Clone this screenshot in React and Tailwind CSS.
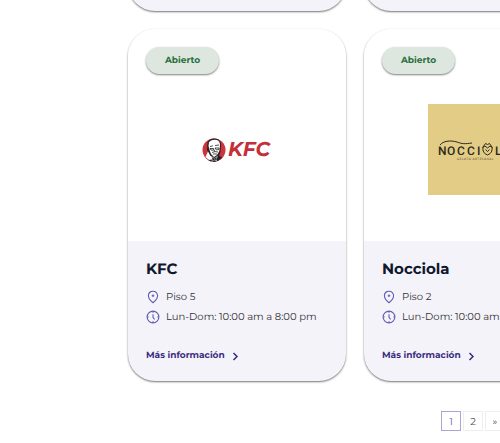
function PinIcon() {
  return (
    <svg className="size-3.5 shrink-0" viewBox="0 0 14 14" fill="none" stroke="#625bb5" strokeWidth="1.1" aria-hidden="true">
      <path d="M7 1.2C4.2 1.2 2.4 3.2 2.4 5.8c0 2.8 2.6 5.4 4.6 7 2-1.600 4.600-4.200 4.600-7C11.600 3.200 9.800 1.200 7 1.200Z" strokeLinejoin="round" />
      <path d="M7 4.500v2.600M5.700 5.800h2.600" />
    </svg>
  );
}

function ClockIcon() {
  return (
    <svg className="size-3.5 shrink-0" viewBox="0 0 14 14" fill="none" stroke="#625bb5" strokeWidth="1.1" aria-hidden="true">
      <circle cx="7" cy="7" r="5.9" />
      <path d="M7 1v1.700M7 11.300V13M1 7h1.700M11.300 7H13M7 4.200V7.400l1.600 1.900" />
    </svg>
  );
}

function Chevron() {
  return (
    <svg className="size-2.5" viewBox="0 0 10 10" fill="none" stroke="currentColor" strokeWidth="1.5" aria-hidden="true">
      <path d="m2.500 2 3.500 3.500L2.500 9" />
    </svg>
  );
}

function KfcLogo() {
  return (
    <svg className="h-[26px] w-[70px]" viewBox="0 0 70 26" role="img" aria-label="KFC">
      <circle cx="12" cy="13" r="11.500" fill="#c9343d" />
      <path d="M6 23 7.500 17.500 5 13 5.500 5Q8 1 13 1.500Q19 2 19 8L18.500 15 17 18.500 20 20.500Q16 25 11 25Q8 24.600 6 23Z" fill="#252122" />
      <path d="M7 5Q10 2 15 3Q18 4 18 8L17.400 14 15 18 12 20 9 17 7.500 13 6.500 9Z" fill="#fff" />
      <path d="M8 9.500 11 8.800M13 8.500 17 8M8 11.500h3.600v1.600H9ZM13 11h4v1.500l-2.500.500ZM12 12.500l.6 2M10 15.500q3-1.600 6-.500M11 17h4" fill="none" stroke="#252122" strokeWidth=".8" />
      <path d="M6 14.500 8.200 18.500 12 22 7 23 3.500 20Z" fill="#fff" />
      <path d="m9.500 19.500 3 1.800 3-2-1.500 3 1 2-3-1.500-2 2 .2-2.800Z" fill="#252122" stroke="#fff" strokeWidth=".5" />
      <text x="26" y="19" fill="#c52f39" className="font-[Montserrat,Inter,sans-serif] text-[20px] font-bold italic">KFC</text>
    </svg>
  );
}

function NocciolaLogo() {
  return (
    <svg className="size-[91px]" viewBox="0 0 91 91" role="img" aria-label="Nocciola gelato artesanal">
      <rect width="91" height="91" fill="#e3cc85" />
      <g fill="#2b2820" className="font-[Roboto,sans-serif] text-[12px] font-medium">
        <text x="10" y="51">N</text>
        <text x="19" y="51">O</text>
        <text x="29" y="51">C</text>
        <text x="39" y="51">C</text>
        <text x="49" y="51">I</text>
        <text x="67" y="51">L</text>
        <text x="75" y="51">A</text>
      </g>
      <g fill="none" stroke="#2b2820" strokeWidth="1">
        <path d="M12 41C15 37 22 36 29 38C34 40 37 40 44 39" />
        <path d="M55 43Q54 49 59.500 51Q65 49 64 43L61.500 39.500 59.500 40.500 57.500 39.500Z" />
        <path d="M54.500 43.500 57 42 59.500 44 62 42 64.500 43.500M57.500 45.500 59.500 47.500 61.500 45.500" />
      </g>
      <text x="29" y="56" fill="#4c4531" className="font-[Lato,sans-serif] text-[3px] tracking-[0.5px]">GELATO ARTESANAL</text>
    </svg>
  );
}

const cardFrame = "overflow-hidden rounded-[27px] shadow-[0_1px_2px_rgba(0,0,0,0.55)]";

function StoreCard({ name, floor, hours, logo }) {
  return (
    <article className={`${cardFrame} bg-[#f4f3f9]`}>
      <div className="flex h-[212px] flex-col bg-white px-[18px] pt-[18px]">
        <span className="flex h-[27px] w-[73px] items-center justify-center rounded-full bg-[#dde7df] text-[9px] font-bold text-[#28703e] shadow-[0_1px_2px_rgba(0,0,0,0.5)]">
          Abierto
        </span>
        <div className="flex h-[151px] items-center justify-center">{logo}</div>
      </div>
      <div className="flex h-[140px] flex-col px-[18px] pt-[18px]">
        <h2 className="text-[15px] leading-5 font-bold text-[#10182d]">{name}</h2>
        <ul className="mt-2 text-[10px] leading-5 text-[#323137]">
          <li className="flex items-center gap-1.5 whitespace-nowrap"><PinIcon />{floor}</li>
          <li className="flex items-center gap-1.5 whitespace-nowrap"><ClockIcon />{hours}</li>
        </ul>
        <a href="#info" className="mt-[21px] flex items-center gap-1.5 text-[9px] leading-4 font-bold text-[#3b2c80]">
          Más información<Chevron />
        </a>
      </div>
    </article>
  );
}

export default function App() {
  const hours = "Lun-Dom: 10:00 am a 8:00 pm";
  return (
    <div className="overflow-hidden bg-white font-[Montserrat,Inter,sans-serif] [text-rendering:geometricPrecision]">
      <main className="ml-32 w-[690px] pb-3">
        <div className="-mx-1 grid h-[15px] grid-cols-3 content-end gap-[18px] overflow-hidden px-1 pb-1">
          <div className={`${cardFrame} h-16 bg-[#f4f3f9]`} />
          <div className={`${cardFrame} h-16 bg-[#f4f3f9]`} />
          <div className={`${cardFrame} h-16 bg-[#f4f3f9]`} />
        </div>
        <section className="mt-3.5 grid grid-cols-3 gap-[18px]">
          <StoreCard name="KFC" floor="Piso 5" hours={hours} logo={<KfcLogo />} />
          <StoreCard name="Nocciola" floor="Piso 2" hours={hours} logo={<NocciolaLogo />} />
        </section>
        <nav aria-label="Paginación" className="mt-[30px] flex justify-center gap-0.5 text-[10px] text-[#4a4a4a]">
          <button className="size-5 border border-[#aaa5d2] text-[#625bb5]">1</button>
          <button className="size-5 border border-[#eeeeee]">2</button>
          <button className="size-5 border border-[#eeeeee]">»</button>
        </nav>
      </main>
    </div>
  );
}
